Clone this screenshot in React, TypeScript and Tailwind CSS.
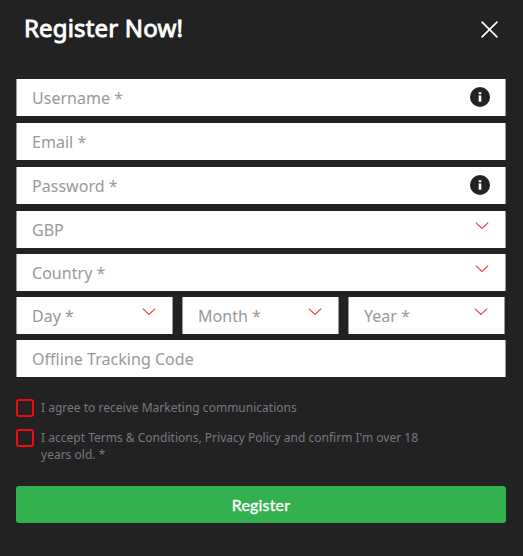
import type { ReactNode } from "react";

interface FieldProps {
  label: string;
  icon?: ReactNode;
  className?: string;
}

function InfoIcon() {
  return (
    <svg width="20" height="20" viewBox="0 0 20 20" className="mr-[14.6px] mt-[8.4px]">
      <circle cx="10" cy="10" r="10" fill="#222222" />
      <path d="M8.7 5.2h2.6v2H8.7zM8.4 8.4h2.9v6.4H8.7V9.6h-.3z" fill="#fff" />
    </svg>
  );
}

function ChevronIcon() {
  return (
    <svg
      width="14"
      height="8"
      viewBox="0 0 14 8"
      fill="none"
      stroke="#e8404a"
      strokeWidth="1.1"
      className="mr-4 mt-[10.5px]"
    >
      <path d="M0.8 0.7 7 6.5l6.2-5.8" />
    </svg>
  );
}

function Field({ label, icon, className = "" }: FieldProps) {
  return (
    <label
      className={`flex h-[37px] items-start justify-between border-x border-[#999999] bg-white pl-[15px] text-base leading-[39px] tracking-[0.03px] text-[#999999] ${className}`}
    >
      <span>{label}</span>
      {icon}
    </label>
  );
}

function Consent({ children }: { children: ReactNode }) {
  return (
    <label className="flex items-start gap-[7px] text-xs leading-[17px] tracking-[0.01px] text-[#777882]">
      <span
        role="checkbox"
        aria-checked="false"
        className="size-[18px] shrink-0 rounded-[3px] border-2 border-[#f00a14]"
      />
      <span>{children}</span>
    </label>
  );
}

export default function App() {
  return (
    <div className="h-[556px] w-[523px] bg-[#222222] font-['Noto_Sans',sans-serif]">
      <header className="flex h-[79px] items-start justify-between pl-6 pr-[25px]">
        <h1 className="mt-3 text-2xl leading-8 font-normal tracking-[0.17px] text-white [-webkit-text-stroke:0.9px_white]">
          Register Now!
        </h1>
        <button type="button" aria-label="Close" className="mt-[21px]">
          <svg
            width="17"
            height="17"
            viewBox="0 0 17 17"
            fill="none"
            stroke="#fff"
            strokeWidth="1.6"
            className="block"
          >
            <path d="M0.6 0.6l15.8 15.8M16.4 0.6L0.6 16.4" />
          </svg>
        </button>
      </header>

      <form className="ml-4 w-[490px]">
        <div className="flex flex-col gap-[7px]">
          <Field label="Username *" icon={<InfoIcon />} />
          <Field label="Email *" />
          <Field label="Password *" icon={<InfoIcon />} />
          <Field label="GBP" icon={<ChevronIcon />} />
        </div>
        <div className="mt-[6px] flex flex-col gap-[6px]">
          <Field label="Country *" icon={<ChevronIcon />} />
          <div className="flex gap-[9px]">
            <Field label="Day *" icon={<ChevronIcon />} className="w-[157px]" />
            <Field label="Month *" icon={<ChevronIcon />} className="w-[157px]" />
            <Field label="Year *" icon={<ChevronIcon />} className="w-[157px]" />
          </div>
          <Field label="Offline Tracking Code" />
        </div>

        <div className="mt-[22px] flex flex-col gap-3">
          <Consent>I agree to receive Marketing communications</Consent>
          <Consent>
            I accept Terms &amp; Conditions, Privacy Policy and confirm I'm over 18
            <br />
            years old. *
          </Consent>
        </div>

        <button
          type="button"
          className="mt-[23px] block h-[37px] w-full rounded-[3px] bg-[#34b14f] font-['Lato',sans-serif] text-base font-normal tracking-[0.2px] text-white [-webkit-text-stroke:0.35px_white]"
        >
          Register
        </button>
      </form>
    </div>
  );
}
